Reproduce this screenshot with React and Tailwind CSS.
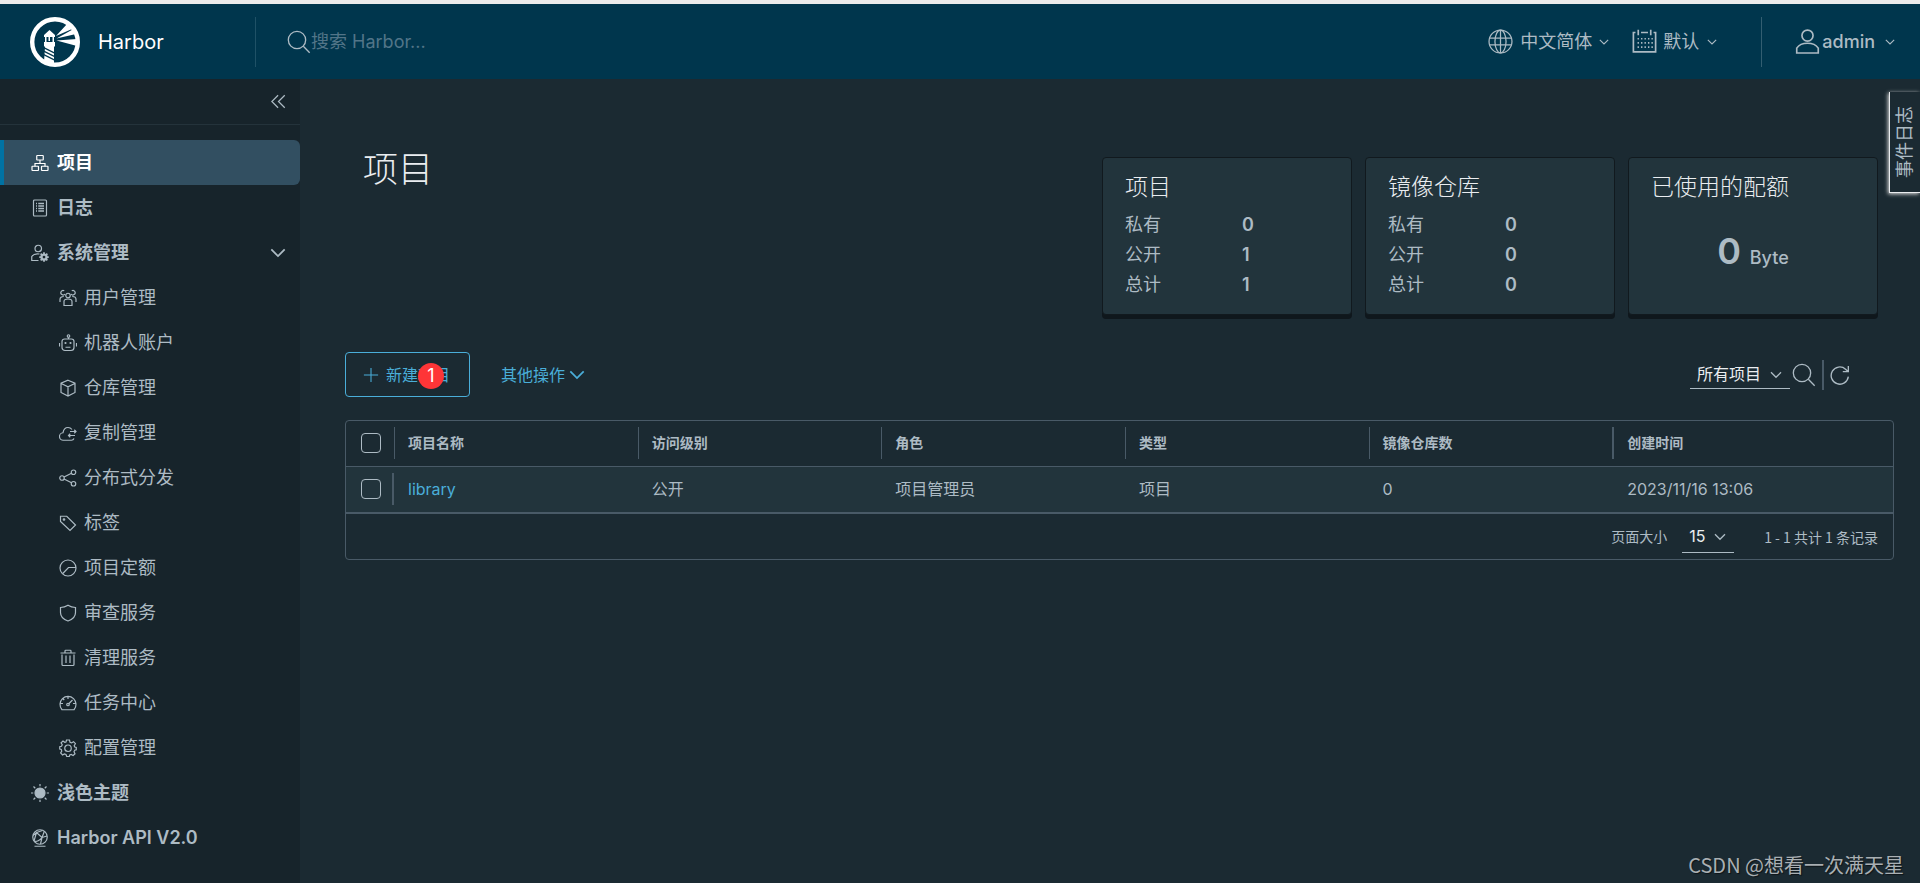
import React, { useState } from 'react';

const ICONS = {
    organization: (
        <>
            <rect x="11.500" y="3" width="13" height="9" rx="1" />
            <rect x="2" y="24.500" width="13" height="8.500" rx="1" />
            <rect x="21" y="24.500" width="13" height="8.500" rx="1" />
            <path d="M18 12v6M8 25v-6h20v6" />
        </>
    ),
    list: (
        <>
            <rect x="5" y="2" width="26" height="32" rx="2" />
            <path d="M10 9h2M10 14h2M10 19h2M10 24h2M14.5 9H26M14.5 14H26M14.5 19H26M14.5 24H26" strokeWidth="2.6" />
        </>
    ),
    administrator: (
        <>
            <circle cx="14.5" cy="9" r="6.500" />
            <path d="M17 20C9 18.500 4 21.500 1.500 25v8H15" />
            <circle cx="26" cy="26" r="5" strokeWidth="4.500" />
            <path d="M26 16.500v4M26 31.500v4M16.500 26h4M31.500 26h4M19.300 19.300l2.800 2.800M29.900 29.900l2.800 2.800M32.700 19.300l-2.800 2.800M22.100 29.900l-2.800 2.800" strokeWidth="3.500" />
        </>
    ),
    users: (
        <>
            <circle cx="18" cy="13" r="4.500" />
            <path d="M10 33v-8c0-3 3.500-5 8-5s8 2 8 5v8zM12 10a4.500 4.500 0 1 1-1.500-6.500M24 10a4.500 4.500 0 1 0 1.500-6.500M9.500 15C5 15 2 17.500 2 20.500V26M26.500 15c4.500 0 7.500 2.500 7.500 5.500V26" />
        </>
    ),
    robot: (
        <>
            <circle cx="19" cy="4" r="2.500" />
            <path d="M19 6.500V10M11 10h14a5 5 0 0 1 5 5v12a6 6 0 0 1-6 6H12a6 6 0 0 1-6-6V15a5 5 0 0 1 5-5zM1 18v7M35 18v7M13 26.500h10" />
            <circle cx="13" cy="18" r="1" />
            <circle cx="23" cy="18" r="1" />
        </>
    ),
    box: (
        <path d="M18 2.500l14 6v18.500l-14 7-14-7V8.500zM4.500 9L18 15.500 31.500 9M18 15.500V33.500" />
    ),
    cloudTraffic: (
        <>
            <path d="M30 29c-1 2.500-2.500 3.500-5 3.500H9a7.500 7.500 0 0 1-1-15C9 11 13 7 18 7c3.500 0 6 1.500 8 4" />
            <path d="M22 15h12M30.500 11.500L34 15l-3.500 3.500M32 23H19M22.500 19.500L19 23l3.500 3.500" />
        </>
    ),
    share: (
        <>
            <circle cx="6" cy="18" r="4.500" />
            <circle cx="29" cy="6.500" r="4.500" />
            <circle cx="29" cy="29.500" r="4.500" />
            <path d="M10 16l15-7.500M10 20l15 7.500" />
        </>
    ),
    tag: (
        <>
            <path d="M3 4.500h12.500L33 22 22 33 3 15z" />
            <circle cx="10" cy="11" r="1.500" />
        </>
    ),
    quota: (
        <>
            <circle cx="18" cy="18" r="16" />
            <path d="M34 17H19L7.500 29" />
        </>
    ),
    shield: (
        <path d="M18 2.500C22.500 5.500 27.500 7 33 7v10c0 8-6 14-15 17C9 31 3 25 3 17V7c5.500 0 10.500-1.500 15-4.500z" />
    ),
    trash: (
        <path d="M3 8h30M12 8V4c0-1 .5-1.500 1.500-1.500h9c1 0 1.500.5 1.500 1.500v4M6 11v20a2 2 0 0 0 2 2h20a2 2 0 0 0 2-2V11M14 13v15M22 13v15" />
    ),
    dashboard: (
        <>
            <path d="M6 31.500A16 16 0 1 1 30 31.500zM18 5v5M3 19h5M28 19h5M7.500 9l3 3M19 20l8-8" />
            <circle cx="18" cy="21" r="2.500" />
        </>
    ),
    cog: (
        <>
            <path d="M15 2h6l1 4.500 3 1.300 4-2.400 3.800 4-2.500 4L31.500 16l3 1v4.500l-3 .8-1.500 3.200 2 4-3.800 3.500-3.700-2.200-3 1.200L20.500 35h-5L14 31l-3.200-1.200-3.700 2.200L3.300 28l2.200-3.800L4.500 21 1.500 20v-4.500l3.500-1L6.500 11.500l-2.400-3.800L8 4l3.500 2.500L14 6z" />
            <circle cx="18" cy="18.500" r="6.500" />
        </>
    ),
    sun: (
        <>
            <circle cx="18" cy="18" r="10" fill="currentColor" />
            <path d="M18 0v4.500M18 31.500V36M0 18h4.500M31.500 18H36M5 5l3.500 3.500M27.500 27.500L31 31M31 5l-3.500 3.500M8.500 27.500L5 31" />
        </>
    ),
    api: (
        <>
            <circle cx="18" cy="16" r="14.500" />
            <path d="M7 34.500h22M4 13l7-6 11 10 5-13M11 7l12-4M6 24l5-17M22 17l10-3M22 17l-3 13M6 24c5 2 12-1 16-7" />
        </>
    ),
    search: (
        <>
            <circle cx="15" cy="15" r="13" />
            <path d="M24.500 24.500L34 34" />
        </>
    ),
    world: (
        <>
            <circle cx="18" cy="18" r="16.500" />
            <ellipse cx="18" cy="18" rx="8" ry="16.500" />
            <path d="M18 1.500v33M2 13h32M2 23h32" />
        </>
    ),
    calendar: (
        <>
            <path d="M5 5H2v28h32V5h-3M13 5h10M9 1v8M27 1v8" />
            <path d="M8 14h22M8 20h22M8 26h22" strokeDasharray="2 3" />
        </>
    ),
    user: (
        <>
            <circle cx="18" cy="9.500" r="8" />
            <path d="M2.500 34.500v-7c3-4.500 9-7 15.500-7s12.500 2.500 15.500 7v7z" />
        </>
    ),
    angleDown: <path d="M3 10l15 15 15-15" />,
    collapse: <path d="M17 3L2 18l15 15M33 3L18 18l15 15" />,
    plus: <path d="M18 2v32M2 18h32" />,
    refresh: (
        <path d="M33 21A15.500 15.500 0 1 1 28 7.500L33 12M33 2v10H23" />
    ),
};

const Icon = ({ name, className = 'size-[18px]', stroke = 2.4 }) => (
    <svg className={`shrink-0 ${className}`} viewBox="0 0 36 36" fill="none" stroke="currentColor" strokeWidth={stroke} aria-hidden="true">
        {ICONS[name]}
    </svg>
);

const Logo = () => (
    <svg className="size-[50px] shrink-0" viewBox="0 0 50 50" aria-hidden="true">
        <circle cx="25" cy="25" r="22.800" fill="none" stroke="#fff" strokeWidth="4.400" />
        <path fill="#fff" d="M19.500 13l5.500 5v2h-1v5h1v4l-1 1v18l-10-3 1-15-1-1v-4h1v-5h-1v-2z" />
        <path fill="#00364d" d="M16.500 20h6v5h-6zM14 30l10 5v1.500L14 31.500zM14 33.500l10 5v1.500l-10-5zM14 37l10 5v1.500l-10-5z" />
        <path fill="#fff" d="M18.500 20h1.500v4h-1.500z" />
        <path fill="#fff" d="M26 19L37 7l5 5zM26.500 21.500L43.500 12l2.500 5zM26.500 23.500L47 22v7z" />
    </svg>
);

const systemItems = [
    { label: '用户管理', icon: 'users' },
    { label: '机器人账户', icon: 'robot' },
    { label: '仓库管理', icon: 'box' },
    { label: '复制管理', icon: 'cloudTraffic' },
    { label: '分布式分发', icon: 'share' },
    { label: '标签', icon: 'tag' },
    { label: '项目定额', icon: 'quota' },
    { label: '审查服务', icon: 'shield' },
    { label: '清理服务', icon: 'trash' },
    { label: '任务中心', icon: 'dashboard' },
    { label: '配置管理', icon: 'cog' },
];

const TopHeader = () => (
    <header className="flex h-[79px] shrink-0 items-center border-t-4 border-[#ececec] bg-[#00364d] text-lg text-[#adbbc4]">
        <a href="#home" className="flex w-[255px] items-center gap-[18px] pl-[30px] text-xl text-white">
            <Logo />
            Harbor
        </a>
        <div className="h-[50px] w-px bg-[#1f5166]" />
        <label className="flex flex-1 items-center pl-[31px]">
            <Icon name="search" className="size-6" stroke={2} />
            <input
                type="text"
                aria-label="搜索"
                placeholder="搜索 Harbor..."
                className="w-[240px] bg-transparent outline-none placeholder:text-[#527588]"
            />
        </label>
        <button className="flex items-center gap-[7px]">
            <Icon name="world" className="size-[25px]" stroke={1.8} />
            中文简体
            <Icon name="angleDown" className="size-2.5" stroke={4} />
        </button>
        <button className="ml-[23px] flex items-center gap-1.5">
            <Icon name="calendar" className="size-[25px]" />
            默认
            <Icon name="angleDown" className="ml-0.5 size-2.5" stroke={4} />
        </button>
        <div className="ml-11 h-[50px] w-px bg-[#335e71]" />
        <button className="mr-[25px] ml-[33px] flex items-center gap-0.5 font-medium">
            <Icon name="user" className="size-[25px]" />
            admin
            <Icon name="angleDown" className="ml-2 size-2.5" stroke={4} />
        </button>
    </header>
);

const Sidebar = () => {
    const [open, setOpen] = useState(true);

    return (
        <nav className="flex w-[300px] shrink-0 flex-col bg-[#17242b] text-lg text-[#adbbc4]">
            <div className="mb-[15px] flex h-[46px] items-center justify-end border-b border-[#24333b] pr-3.5">
                <button aria-label="收起">
                    <Icon name="collapse" className="size-[15px]" stroke={3} />
                </button>
            </div>
            <a href="#projects" className="flex h-[45px] items-center gap-2 rounded-r-md border-l-4 border-[#0072a3] bg-[#324f61] pl-[27px] font-bold text-white">
                <Icon name="organization" />
                项目
            </a>
            <a href="#logs" className="flex h-[45px] items-center gap-2 pl-[31px] font-bold">
                <Icon name="list" />
                日志
            </a>
            <button onClick={() => setOpen(!open)} className="flex h-[45px] items-center gap-2 pr-3.5 pl-[31px] font-bold">
                <Icon name="administrator" />
                系统管理
                <Icon name="angleDown" className="ml-auto size-4" stroke={4} />
            </button>
            {open && (
                <ul>
                    {systemItems.map((item) => (
                        <li key={item.label}>
                            <a href="#system" className="flex h-[45px] items-center gap-[7px] pl-[59px]">
                                <Icon name={item.icon} />
                                {item.label}
                            </a>
                        </li>
                    ))}
                </ul>
            )}
            <button className="flex h-[45px] items-center gap-2 pl-[31px] font-bold">
                <Icon name="sun" />
                浅色主题
            </button>
            <a href="#api" className="flex h-[45px] items-center gap-2 pl-[31px] font-semibold">
                <Icon name="api" />
                Harbor API V2.0
            </a>
        </nav>
    );
};

const StatCard = ({ title, children }) => (
    <section className="h-[158px] w-[250px] rounded border border-[#11191e] bg-[#22343c] px-[22px] pt-[13px] shadow-[0_4px_0_#0f171c]">
        <h2 className="text-[23px] leading-8 font-light text-[#eaedf0]">{title}</h2>
        {children}
    </section>
);

const StatRows = ({ rows }) => (
    <dl className="mt-[7px] text-lg leading-[30px]">
        {rows.map(([label, value]) => (
            <div key={label} className="flex">
                <dt className="w-[117px]">{label}</dt>
                <dd className="font-semibold">{value}</dd>
            </div>
        ))}
    </dl>
);

const columns = ['项目名称', '访问级别', '角色', '类型', '镜像仓库数', '创建时间'];
const projects = [
    { name: 'library', cells: ['公开', '项目管理员', '项目', '0', '2023/11/16 13:06'] },
];

const Checkbox = ({ label }) => (
    <input type="checkbox" aria-label={label} className="block size-5 appearance-none rounded border border-[#adbbc4] checked:bg-[#4aaed9]" />
);

const ProjectTable = () => (
    <div className="mt-[23px] rounded border border-[#495a67]">
        <table className="w-full table-fixed border-collapse text-left">
            <colgroup>
                <col className="w-12" />
                <col className="w-[15.75%]" />
                <col className="w-[15.75%]" />
                <col className="w-[15.75%]" />
                <col className="w-[15.75%]" />
                <col className="w-[15.75%]" />
                <col />
            </colgroup>
            <thead className="text-sm">
                <tr className="h-[45px] border-b border-[#495a67]">
                    <th className="pl-[15px]">
                        <Checkbox label="全选" />
                    </th>
                    {columns.map((name) => (
                        <th key={name} className="group font-bold">
                            <div className="flex h-8 items-center border-l border-[#495a67] pl-[13px] group-last:border-l-2">{name}</div>
                        </th>
                    ))}
                </tr>
            </thead>
            <tbody className="text-base">
                {projects.map((project) => (
                    <tr key={project.name} className="h-[47px] border-b-2 border-[#495a67] bg-[#22343c]">
                        <td>
                            <div className="flex h-8 items-center border-r-2 border-[#495a67] pl-[15px]">
                                <Checkbox label={project.name} />
                            </div>
                        </td>
                        <td className="pl-3.5">
                            <a href="#library" className="text-[#4aaed9]">{project.name}</a>
                        </td>
                        {project.cells.map((cell) => (
                            <td key={cell} className="pl-3.5 last:pl-[15px]">{cell}</td>
                        ))}
                    </tr>
                ))}
            </tbody>
        </table>
        <div className="flex h-[45px] items-center justify-end pr-[15px] text-sm">
            <label htmlFor="page-size">页面大小</label>
            <div className="relative mr-[30px] ml-[15px] flex items-center">
                <select id="page-size" className="h-8 w-[52px] appearance-none border-b border-[#adbbc4] bg-transparent pl-[7px] text-base text-[#eaedf0]">
                    <option>15</option>
                </select>
                <Icon name="angleDown" className="pointer-events-none absolute right-2 size-3" stroke={4} />
            </div>
            <span className="font-['Noto_Sans_CJK_SC',sans-serif]">1 - 1 共计 1 条记录</span>
        </div>
    </div>
);

const App = () => {
    return (
        <div className="flex min-h-screen flex-col bg-[#1b2a32] font-[Inter,'Noto_Sans_CJK_SC',sans-serif] text-[#adbbc4]">
            <TopHeader />
            <div className="relative flex flex-1">
                <Sidebar />
                <main className="min-w-0 flex-1 pr-[26px] pl-[45px]">
                    <div className="flex items-start justify-between pr-4">
                        <h1 className="pt-[65px] pl-[18px] text-[35px] leading-[50px] font-light text-[#eaedf0]">项目</h1>
                        <div className="flex gap-[13px] pt-[78px]">
                            <StatCard title="项目">
                                <StatRows rows={[['私有', 0], ['公开', 1], ['总计', 1]]} />
                            </StatCard>
                            <StatCard title="镜像仓库">
                                <StatRows rows={[['私有', 0], ['公开', 0], ['总计', 0]]} />
                            </StatCard>
                            <StatCard title="已使用的配额">
                                <p className="mt-7 text-center text-lg font-medium">
                                    <span className="mr-1 text-4xl font-semibold">0</span> Byte
                                </p>
                            </StatCard>
                        </div>
                    </div>

                    <div className="mt-[37px] flex items-center text-base text-[#4aaed9]">
                        <button className="relative flex h-[45px] w-[125px] items-center gap-[7px] rounded border border-[#4aaed9] pl-[17px]">
                            <Icon name="plus" className="size-4" />
                            新建项目
                            <span className="absolute top-2.5 left-[72px] flex size-[26px] items-center justify-center rounded-full bg-[#fe3537] text-lg leading-none text-white">1</span>
                        </button>
                        <button className="ml-[31px] flex items-center gap-1">
                            其他操作
                            <Icon name="angleDown" className="size-4" stroke={4} />
                        </button>
                        <div className="mr-11 ml-auto flex items-center text-[#adbbc4]">
                            <div className="relative flex items-center">
                                <select aria-label="项目类型" className="h-7 w-[100px] appearance-none border-b border-[#adbbc4] bg-transparent pl-[7px] text-base text-[#eaedf0]">
                                    <option>所有项目</option>
                                </select>
                                <Icon name="angleDown" className="pointer-events-none absolute right-2 size-3" stroke={4} />
                            </div>
                            <button aria-label="搜索项目" className="ml-0.5">
                                <Icon name="search" className="size-6" stroke={2} />
                            </button>
                            <div className="mx-1.5 h-[30px] w-0.5 bg-[#495a67]" />
                            <button aria-label="刷新">
                                <Icon name="refresh" className="size-5" />
                            </button>
                        </div>
                    </div>

                    <ProjectTable />
                </main>

                <button className="absolute top-[13px] right-0 flex h-[101px] w-[31px] items-center justify-center border-b border-l border-[#eaedf0] bg-[#1b2a32] text-lg leading-none shadow-[-1px_1px_4px_#ddd]">
                    <span className="rotate-180 [text-orientation:sideways] [writing-mode:vertical-rl]">事件日志</span>
                </button>
                <p className="absolute right-4 bottom-1 font-['Noto_Sans_CJK_SC',sans-serif] text-xl text-[#a9afb3] [text-shadow:1px_1px_1px_#0008]">
                    CSDN @想看一次满天星
                </p>
            </div>
        </div>
    );
};

export default App;
